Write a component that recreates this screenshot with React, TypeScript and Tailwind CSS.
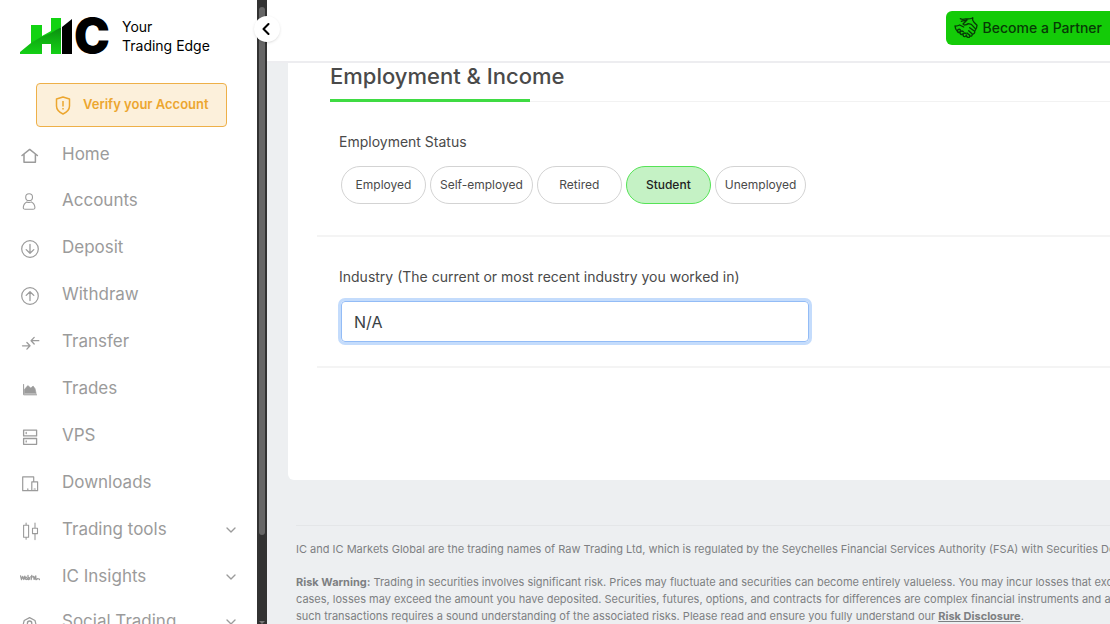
import { useState } from "react";
import type { ReactNode } from "react";
import { ChevronDown, ChevronLeft } from "lucide-react";

type NavItem = {
  label: string;
  icon: ReactNode;
  expandable?: boolean;
  rowClass?: string;
};

function LineIcon({ children }: { children: ReactNode }) {
  return (
    <svg
      className="size-5"
      viewBox="0 0 20 20"
      fill="none"
      stroke="currentColor"
      strokeWidth="1.3"
      strokeLinecap="round"
      strokeLinejoin="round"
      aria-hidden="true"
    >
      {children}
    </svg>
  );
}

const navItems: NavItem[] = [
  {
    label: "Home",
    rowClass: "h-11",
    icon: (
      <LineIcon>
        <path d="M2 9.5 9.7 3.4 17.4 9.5M4 8.2v8h11.4v-8" strokeWidth="1.5" />
      </LineIcon>
    ),
  },
  {
    label: "Accounts",
    icon: (
      <LineIcon>
        <circle cx="9.1" cy="5.2" r="3.4" strokeWidth="1.1" />
        <path
          d="M5.2 17.3h7.8c1.4 0 2-.8 1.9-2-.2-2.8-1.8-4.6-3.6-5.4-1.3.8-3 .8-4.4 0-1.8.8-3.4 2.6-3.6 5.4-.1 1.2.5 2 1.9 2z"
          strokeWidth="1.1"
        />
      </LineIcon>
    ),
  },
  {
    label: "Deposit",
    icon: (
      <LineIcon>
        <circle cx="10" cy="10" r="8.3" strokeWidth="1.2" />
        <path d="M10 5.5v8.7M6.2 10.6l3.8 3.7 3.8-3.7" />
      </LineIcon>
    ),
  },
  {
    label: "Withdraw",
    icon: (
      <LineIcon>
        <circle cx="10" cy="10" r="8.3" strokeWidth="1.2" />
        <path d="M10 14.5V5.8M6.2 9.4 10 5.7l3.8 3.7" />
      </LineIcon>
    ),
  },
  {
    label: "Transfer",
    icon: (
      <LineIcon>
        <path d="M2.5 12.8h7.3M6.9 9.5l3.1 3.3-3.1 3.3M18.8 7.7h-7.5M14.2 4.4l-3.1 3.3 3.1 3.3" />
      </LineIcon>
    ),
  },
  {
    label: "Trades",
    icon: (
      <LineIcon>
        <path d="M3.6 4.5v10.3h13" strokeWidth="1" />
        <path
          d="M4.4 13.5v-4l3.4-3.9 3 2.4 2.3-2 2 2.7 1 4.8z"
          fill="currentColor"
          strokeWidth=".6"
        />
      </LineIcon>
    ),
  },
  {
    label: "VPS",
    icon: (
      <LineIcon>
        <path d="M3.6 3.1h13v5.8h-13zM3.6 11.5h13v5.8h-13zM6.2 5.5v1M6.2 13.9v1" />
      </LineIcon>
    ),
  },
  {
    label: "Downloads",
    icon: (
      <LineIcon>
        <path
          d="M11.8 16.7H2.7V2.9h11v5M11.8 7.8h5.8v8.9h-5.8zM7.8 14.8v1.6M14.1 15h1.2"
          strokeWidth="1.2"
        />
      </LineIcon>
    ),
  },
  {
    label: "Trading tools",
    expandable: true,
    icon: (
      <LineIcon>
        <path
          d="M3.6 4.3h5v12h-5zM6.1 2v2.3M6.1 16.3v2M12.5 7.2h5v5.4h-5zM15 2v5.2M15 12.6v6"
          strokeWidth="1.1"
        />
      </LineIcon>
    ),
  },
  {
    label: "IC Insights",
    expandable: true,
    icon: (
      <LineIcon>
        <path
          d="M.6 7.9l.9 3.6 1.2-3.1 1.1 3.1 1-3.3M5.3 10.2c2.2-.3.4-2.3-.1.1.2 1.8 1.6 1.4 2.1.5M8 7.4v4.1c1.6.6 2.5-2.3.2-2M11.8 7.3l-.6 4.2M10.6 8.9l2.6-.3M13.6 8.4l.5 3 1.5-3.3M15.8 11.5v-3.5M17.4 10.6l-.7.9M18.8 10.8l.7.7"
          strokeWidth="1.3"
        />
      </LineIcon>
    ),
  },
  {
    label: "Social Trading",
    expandable: true,
    rowClass: "h-11",
    icon: (
      <LineIcon>
        <path d="M5.3 17.5 3.2 11.5 4.2 7.5 9.6 4.6 15 7.5l1 4-2.1 6" strokeWidth="1.2" />
        <circle cx="9.6" cy="10.2" r="2.2" />
        <path d="M6.5 17c.5-3 5.7-3 6.2 0" />
      </LineIcon>
    ),
  },
];

const statuses = ["Employed", "Self-employed", "Retired", "Student", "Unemployed"];

function Logo() {
  return (
    <a href="#" className="flex items-center gap-3 text-black" aria-label="IC Markets">
      <svg className="h-[38px] w-[90px]" viewBox="0 0 90 38" aria-hidden="true">
        <defs>
          <linearGradient id="bars" x1="0" y1="0" x2="0" y2="1">
            <stop offset="0" stopColor="#0b8a10" />
            <stop offset=".45" stopColor="#0fae12" />
            <stop offset="1" stopColor="#14d016" />
          </linearGradient>
        </defs>
        <path d="M42 10 52 2v35H42z" />
        <text
          x="54"
          y="36"
          fontFamily="Inter, sans-serif"
          fontWeight="900"
          fontSize="48"
        >
          C
        </text>
        <path d="M11 8h11v11l9-5V1h10v9L30 19 20 23 11 28z" fill="#12d312" />
        <path d="M0 37v-2L11 26 21 20 31 16 41 10v27H31V27h-9v10z" fill="url(#bars)" />
      </svg>
      <span className="text-sm leading-[19px]">
        Your
        <br />
        Trading Edge
      </span>
    </a>
  );
}

function Sidebar() {
  return (
    <aside className="relative flex h-full shrink-0">
      <div className="flex w-[257px] flex-col overflow-hidden bg-white">
        <div className="pt-[17px] pl-5">
          <Logo />
        </div>
        <button
          type="button"
          className="mx-9 mt-7 flex h-11 w-[191px] shrink-0 items-center gap-3 rounded-sm border border-[#eeb048] bg-[#fcf0db] pl-[18px] text-[13px] font-semibold text-[#eca62f]"
        >
          <svg
            className="h-[19px] w-4"
            viewBox="0 0 16 19"
            fill="none"
            stroke="currentColor"
            strokeWidth="1.5"
            strokeLinejoin="round"
            aria-hidden="true"
          >
            <path d="M8 1 14.5 3v7c0 4-2.8 6.3-6.5 8-3.7-1.7-6.5-4-6.5-8V3zM8 5v5.5M8 12v1.5" />
          </svg>
          Verify your Account
        </button>
        <nav className="mt-[6px] flex flex-col">
          {navItems.map((item) => (
            <a
              key={item.label}
              href="#"
              className={`flex shrink-0 items-center pr-[18px] pl-5 text-[17px] text-[#9b9b9b] ${item.rowClass ?? "h-[47px]"}`}
            >
              <span className="mr-[22px] pt-[2px]">{item.icon}</span>
              <span className="flex-1">{item.label}</span>
              {item.expandable && <ChevronDown className="size-4" strokeWidth={2} />}
            </a>
          ))}
        </nav>
      </div>

      {/* scroll track */}
      <div className="flex w-[10px] flex-col items-center justify-between bg-[#323232]">
        <div className="mt-[7px] h-[528px] w-[6px] rounded-full bg-[#666]" />
        <svg className="h-[3px] w-[6px]" viewBox="0 0 6 3" fill="#777" aria-hidden="true">
          <path d="M0 0h6L3 3z" />
        </svg>
      </div>

      <button
        type="button"
        aria-label="Collapse menu"
        className="absolute top-4 -right-[13px] z-20 flex size-[26px] items-center justify-center rounded-full bg-white pr-[2px] text-black shadow"
      >
        <ChevronLeft className="size-5" strokeWidth={2.5} />
      </button>
    </aside>
  );
}

function PartnerIcon() {
  return (
    <svg
      className="h-[22px] w-6"
      viewBox="0 0 72 66"
      fill="none"
      stroke="currentColor"
      strokeWidth="4"
      strokeLinecap="round"
      strokeLinejoin="round"
      aria-hidden="true"
    >
      <path d="M19 5c6 4 11 1 16 1s12 1 21-3M22 13c7-3 11-1 17-4L27 21c3 5 10 3 16-1l9 2 12 13" />
      <path d="M56 3c-2 6 0 9 4 13l9 9c0 7-2 11-6 16" />
      <path d="M3 27c6 1 10-1 14-3l12 6M3 27c0 7 3 12 8 17M11 44c-3-5 4-10 8-5M19 50c-4-5 4-11 9-6M28 56c-4-5 3-11 8-6" />
      <path d="M11 44c2 4 5 3 8-1M19 50c2 4 6 3 9-1M28 56c2 5 7 3 10-2M38 59c8 5 11 1 9-5M47 57c6 2 9-2 7-7M54 51c6 1 9-3 8-8L47 32M54 50l-10-9M47 55l-8-7" />
    </svg>
  );
}

export default function App() {
  const [status, setStatus] = useState("Student");
  const [industry, setIndustry] = useState("N/A");

  return (
    <div className="flex h-screen overflow-hidden bg-[#edeff1] font-[Inter,'Liberation_Sans',sans-serif]">
      <Sidebar />
      <div className="flex min-w-0 flex-1 flex-col overflow-hidden">
        <header className="flex h-[63px] shrink-0 items-start justify-end border-b-2 border-[#ededf0] bg-white pt-[11px]">
          <button
            type="button"
            className="flex h-[34px] items-center gap-[5px] rounded-l-md bg-[#14cb08] pr-2 pl-2 text-sm font-medium text-[#073a06]"
          >
            <PartnerIcon />
            Become a Partner
          </button>
        </header>

        <main className="flex flex-col pl-[21px]">
          <section className="rounded-bl-md bg-white pb-28 pl-[29px]">
            <div className="ml-[13px] border-b border-[#f2f2f2]">
              <h2 className="-mb-px w-[200px] border-b-3 border-[#3fdb43] pb-[9px] text-[22px] leading-[27px] font-medium whitespace-nowrap text-[#4a4a4a]">
                Employment &amp; Income
              </h2>
            </div>

            <div className="border-b-2 border-[#f4f4f4] pt-[30px] pb-[31px] pl-[22px]">
              <p id="status-label" className="text-sm text-[#4a4a4a]">
                Employment Status
              </p>
              <div
                className="mt-[14px] ml-[2px] flex flex-wrap gap-1"
                role="group"
                aria-labelledby="status-label"
              >
                {statuses.map((name) => (
                  <button
                    key={name}
                    type="button"
                    aria-pressed={status === name}
                    onClick={() => setStatus(name)}
                    className={`h-[38px] min-w-[85px] rounded-full border px-[9px] text-xs ${
                      status === name
                        ? "border-[#55e356] bg-[#c5f2c5] font-medium text-[#222]"
                        : "border-[#d3d3d3] bg-white text-[#4a4a4a]"
                    }`}
                  >
                    {name}
                  </button>
                ))}
              </div>
            </div>

            <div className="border-b-2 border-[#f4f4f4] pt-[30px] pb-6 pl-[22px]">
              <label htmlFor="industry" className="block text-sm text-[#4a4a4a]">
                Industry (The current or most recent industry you worked in)
              </label>
              <input
                id="industry"
                type="text"
                value={industry}
                onChange={(event) => setIndustry(event.target.value)}
                className="mt-[14px] ml-[2px] block h-[41px] w-full max-w-[468px] rounded-sm border border-[#93bcf6] px-3 text-base text-[#3a3f44] ring-3 ring-[#c4dcfc] outline-none"
              />
            </div>
          </section>

          <footer className="mt-[45px] ml-2 border-t border-[#e4e6e8] pt-[15px] text-[11px] leading-[17px] whitespace-nowrap text-[#7d7f82]">
            <p>
              IC and IC Markets Global are the trading names of Raw Trading Ltd, which is
              regulated by the Seychelles Financial Services Authority (FSA) with Securities Dealer
            </p>
            <p className="mt-4">
              <strong>Risk Warning:</strong> Trading in securities involves significant risk. Prices
              may fluctuate and securities can become entirely valueless. You may incur losses that
              exceed
              <br />
              cases, losses may exceed the amount you have deposited. Securities, futures, options,
              and contracts for differences are complex financial instruments and are not
              <br />
              such transactions requires a sound understanding of the associated risks. Please read
              and ensure you fully understand our{" "}
              <a href="#" className="font-bold underline">
                Risk Disclosure
              </a>
              .
            </p>
          </footer>
        </main>
      </div>
    </div>
  );
}
